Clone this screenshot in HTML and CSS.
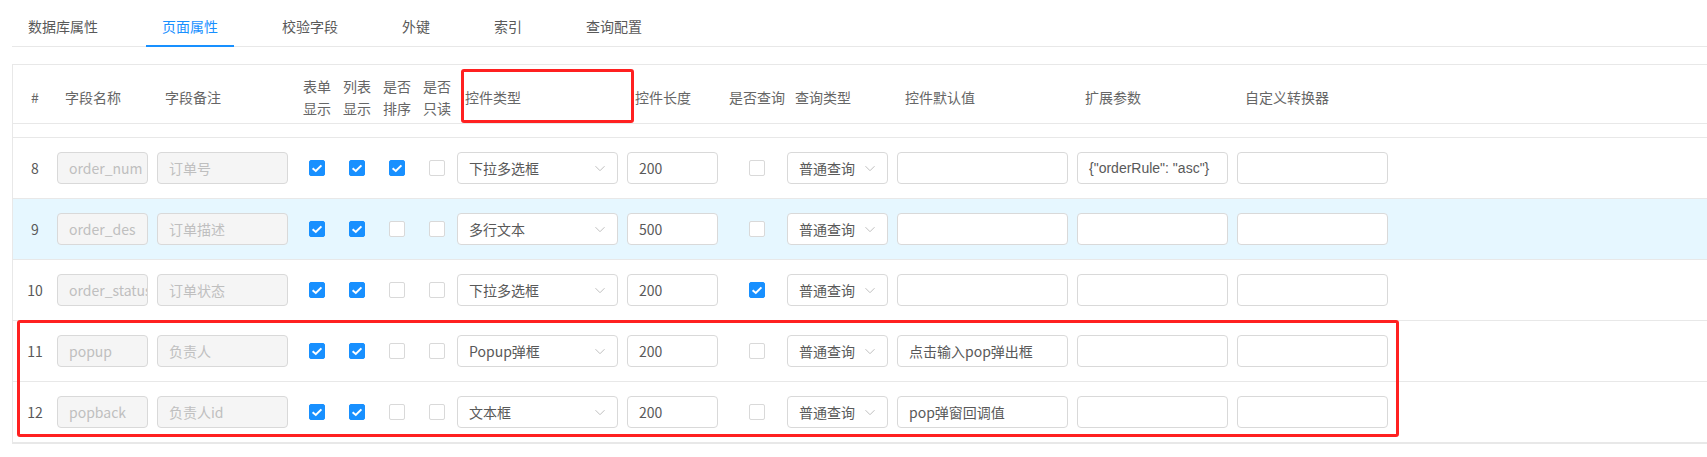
FILE: index.html
```html
<!DOCTYPE html>
<html lang="zh">
<head>
<meta charset="utf-8">
<title>页面属性</title>
<link rel="stylesheet" href="styles.css">
</head>
<body>
<div class="tabs">
  <div class="tab">数据库属性</div>
  <div class="tab active">页面属性</div>
  <div class="tab">校验字段</div>
  <div class="tab">外键</div>
  <div class="tab">索引</div>
  <div class="tab">查询配置</div>
</div>

<div class="table">
  <div class="thead grid">
    <div class="th center">#</div>
    <div class="th">字段名称</div>
    <div class="th">字段备注</div>
    <div class="th center two">表单<br>显示</div>
    <div class="th center two">列表<br>显示</div>
    <div class="th center two">是否<br>排序</div>
    <div class="th center two">是否<br>只读</div>
    <div class="th">控件类型</div>
    <div class="th">控件长度</div>
    <div class="th center">是否查询</div>
    <div class="th">查询类型</div>
    <div class="th">控件默认值</div>
    <div class="th">扩展参数</div>
    <div class="th">自定义转换器</div>
    <div class="th"></div>
  </div>
  <div class="spacer"></div>

  <div class="row grid">
    <div class="td center num">8</div>
    <div class="td"><div class="input dis w91">order_num</div></div>
    <div class="td"><div class="input dis w131">订单号</div></div>
    <div class="td center"><span class="cb on"><svg viewBox="0 0 16 16"><polyline points="3.6,8.2 6.8,11 12.4,5.4"/></svg></span></div>
    <div class="td center"><span class="cb on"><svg viewBox="0 0 16 16"><polyline points="3.6,8.2 6.8,11 12.4,5.4"/></svg></span></div>
    <div class="td center"><span class="cb on"><svg viewBox="0 0 16 16"><polyline points="3.6,8.2 6.8,11 12.4,5.4"/></svg></span></div>
    <div class="td center"><span class="cb"></span></div>
    <div class="td"><div class="input select w161">下拉多选框<svg class="arrow" viewBox="0 0 12 12"><polyline points="1.5,4.2 6,8.7 10.5,4.2"/></svg></div></div>
    <div class="td"><div class="input w91">200</div></div>
    <div class="td center"><span class="cb"></span></div>
    <div class="td"><div class="input select w101">普通查询<svg class="arrow" viewBox="0 0 12 12"><polyline points="1.5,4.2 6,8.7 10.5,4.2"/></svg></div></div>
    <div class="td"><div class="input w171"></div></div>
    <div class="td"><div class="input w151 json">{"orderRule": "asc"}</div></div>
    <div class="td"><div class="input w151"></div></div>
    <div class="td"></div>
  </div>

  <div class="row grid hl">
    <div class="td center num">9</div>
    <div class="td"><div class="input dis w91">order_des</div></div>
    <div class="td"><div class="input dis w131">订单描述</div></div>
    <div class="td center"><span class="cb on"><svg viewBox="0 0 16 16"><polyline points="3.6,8.2 6.8,11 12.4,5.4"/></svg></span></div>
    <div class="td center"><span class="cb on"><svg viewBox="0 0 16 16"><polyline points="3.6,8.2 6.8,11 12.4,5.4"/></svg></span></div>
    <div class="td center"><span class="cb"></span></div>
    <div class="td center"><span class="cb"></span></div>
    <div class="td"><div class="input select w161">多行文本<svg class="arrow" viewBox="0 0 12 12"><polyline points="1.5,4.2 6,8.7 10.5,4.2"/></svg></div></div>
    <div class="td"><div class="input w91">500</div></div>
    <div class="td center"><span class="cb"></span></div>
    <div class="td"><div class="input select w101">普通查询<svg class="arrow" viewBox="0 0 12 12"><polyline points="1.5,4.2 6,8.7 10.5,4.2"/></svg></div></div>
    <div class="td"><div class="input w171"></div></div>
    <div class="td"><div class="input w151"></div></div>
    <div class="td"><div class="input w151"></div></div>
    <div class="td"></div>
  </div>

  <div class="row grid">
    <div class="td center num">10</div>
    <div class="td"><div class="input dis w91">order_status</div></div>
    <div class="td"><div class="input dis w131">订单状态</div></div>
    <div class="td center"><span class="cb on"><svg viewBox="0 0 16 16"><polyline points="3.6,8.2 6.8,11 12.4,5.4"/></svg></span></div>
    <div class="td center"><span class="cb on"><svg viewBox="0 0 16 16"><polyline points="3.6,8.2 6.8,11 12.4,5.4"/></svg></span></div>
    <div class="td center"><span class="cb"></span></div>
    <div class="td center"><span class="cb"></span></div>
    <div class="td"><div class="input select w161">下拉多选框<svg class="arrow" viewBox="0 0 12 12"><polyline points="1.5,4.2 6,8.7 10.5,4.2"/></svg></div></div>
    <div class="td"><div class="input w91">200</div></div>
    <div class="td center"><span class="cb on"><svg viewBox="0 0 16 16"><polyline points="3.6,8.2 6.8,11 12.4,5.4"/></svg></span></div>
    <div class="td"><div class="input select w101">普通查询<svg class="arrow" viewBox="0 0 12 12"><polyline points="1.5,4.2 6,8.7 10.5,4.2"/></svg></div></div>
    <div class="td"><div class="input w171"></div></div>
    <div class="td"><div class="input w151"></div></div>
    <div class="td"><div class="input w151"></div></div>
    <div class="td"></div>
  </div>

  <div class="row grid">
    <div class="td center num">11</div>
    <div class="td"><div class="input dis w91">popup</div></div>
    <div class="td"><div class="input dis w131">负责人</div></div>
    <div class="td center"><span class="cb on"><svg viewBox="0 0 16 16"><polyline points="3.6,8.2 6.8,11 12.4,5.4"/></svg></span></div>
    <div class="td center"><span class="cb on"><svg viewBox="0 0 16 16"><polyline points="3.6,8.2 6.8,11 12.4,5.4"/></svg></span></div>
    <div class="td center"><span class="cb"></span></div>
    <div class="td center"><span class="cb"></span></div>
    <div class="td"><div class="input select w161">Popup弹框<svg class="arrow" viewBox="0 0 12 12"><polyline points="1.5,4.2 6,8.7 10.5,4.2"/></svg></div></div>
    <div class="td"><div class="input w91">200</div></div>
    <div class="td center"><span class="cb"></span></div>
    <div class="td"><div class="input select w101">普通查询<svg class="arrow" viewBox="0 0 12 12"><polyline points="1.5,4.2 6,8.7 10.5,4.2"/></svg></div></div>
    <div class="td"><div class="input w171">点击输入pop弹出框</div></div>
    <div class="td"><div class="input w151"></div></div>
    <div class="td"><div class="input w151"></div></div>
    <div class="td"></div>
  </div>

  <div class="row grid">
    <div class="td center num">12</div>
    <div class="td"><div class="input dis w91">popback</div></div>
    <div class="td"><div class="input dis w131">负责人id</div></div>
    <div class="td center"><span class="cb on"><svg viewBox="0 0 16 16"><polyline points="3.6,8.2 6.8,11 12.4,5.4"/></svg></span></div>
    <div class="td center"><span class="cb on"><svg viewBox="0 0 16 16"><polyline points="3.6,8.2 6.8,11 12.4,5.4"/></svg></span></div>
    <div class="td center"><span class="cb"></span></div>
    <div class="td center"><span class="cb"></span></div>
    <div class="td"><div class="input select w161">文本框<svg class="arrow" viewBox="0 0 12 12"><polyline points="1.5,4.2 6,8.7 10.5,4.2"/></svg></div></div>
    <div class="td"><div class="input w91">200</div></div>
    <div class="td center"><span class="cb"></span></div>
    <div class="td"><div class="input select w101">普通查询<svg class="arrow" viewBox="0 0 12 12"><polyline points="1.5,4.2 6,8.7 10.5,4.2"/></svg></div></div>
    <div class="td"><div class="input w171">pop弹窗回调值</div></div>
    <div class="td"><div class="input w151"></div></div>
    <div class="td"><div class="input w151"></div></div>
    <div class="td"></div>
  </div>

  <div class="mark mark-head"></div>
  <div class="mark mark-rows"></div>
</div>
</body>
</html>
```

FILE: styles.css
```css
html, body {
  margin: 0;
  padding: 0;
  background: #fff;
  overflow: hidden;
}
body {
  padding-left: 12px;
  font-family: "Noto Sans CJK SC", "Noto Sans", sans-serif;
  font-size: 14px;
  color: #595959;
}

/* tabs */
.tabs {
  display: flex;
  height: 46px;
  border-bottom: 1px solid #e8e8e8;
}
.tab {
  position: relative;
  padding: 16px 16px 9px;
  margin-right: 32px;
  line-height: 21px;
  color: #595959;
  white-space: nowrap;
}
.tab.active {
  color: #1890ff;
}
.tab.active::after {
  content: "";
  position: absolute;
  left: 0;
  right: 0;
  bottom: -1px;
  height: 2px;
  background: #1890ff;
}

/* table */
.table {
  position: relative;
  margin-top: 17px;
  margin-right: -20px;
  border-top: 1px solid #e8e8e8;
  border-left: 1px solid #e8e8e8;
  border-bottom: 1px solid #e8e8e8;
}
.grid {
  display: grid;
  grid-template-columns: 44px 100px 140px 40px 40px 40px 40px 170px 100px 60px 110px 180px 160px 160px 1fr;
}
.thead {
  box-sizing: border-box;
  height: 59px;
  padding-top: 5px;
  border-bottom: 1px solid #e8e8e8;
  align-items: center;
  color: #666;
}
.th {
  padding-left: 8px;
  line-height: 22px;
  white-space: nowrap;
}
.th.center {
  padding-left: 0;
  text-align: center;
}
.spacer {
  height: 13px;
  border-bottom: 1px solid #e8e8e8;
}
.row {
  height: 60px;
  border-bottom: 1px solid #e8e8e8;
  align-items: center;
}
.row.hl {
  background: #e6f7ff;
}
.td {
  display: flex;
  align-items: center;
  min-width: 0;
}
.td.center {
  justify-content: center;
}
.num {
  color: #595959;
}

/* inputs */
.input {
  position: relative;
  box-sizing: border-box;
  height: 32px;
  padding: 0 11px;
  border: 1px solid #d9d9d9;
  border-radius: 4px;
  background: #fff;
  line-height: 30px;
  color: #595959;
  white-space: nowrap;
  overflow: hidden;
}
.input.dis {
  background: #f5f5f5;
  color: #bfbfbf;
}
.input.select {
  padding-right: 28px;
}
.input.json {
  font-family: "Liberation Sans", "Noto Sans CJK SC", sans-serif;
}
.arrow {
  position: absolute;
  right: 11px;
  top: 9px;
  width: 12px;
  height: 12px;
  fill: none;
  stroke: #bfbfbf;
  stroke-width: 1;
}
.w91 { width: 91px; }
.w101 { width: 101px; }
.w131 { width: 131px; }
.w151 { width: 151px; }
.w161 { width: 161px; }
.w171 { width: 171px; }

/* checkbox */
.cb {
  box-sizing: border-box;
  display: block;
  width: 16px;
  height: 16px;
  border: 1px solid #d9d9d9;
  border-radius: 2px;
  background: #fff;
}
.cb.on {
  background: #1890ff;
  border-color: #1890ff;
  position: relative;
}
.cb svg {
  position: absolute;
  left: -1px;
  top: -1px;
  width: 16px;
  height: 16px;
  fill: none;
  stroke: #fff;
  stroke-width: 2;
}

/* annotation boxes */
.mark {
  position: absolute;
  box-sizing: border-box;
  border: 3px solid #ff2020;
  border-radius: 3px;
  pointer-events: none;
}
.mark-head {
  left: 448px;
  top: 4px;
  width: 173px;
  height: 54px;
}
.mark-rows {
  left: 4px;
  top: 255px;
  width: 1382px;
  height: 117px;
}
```
